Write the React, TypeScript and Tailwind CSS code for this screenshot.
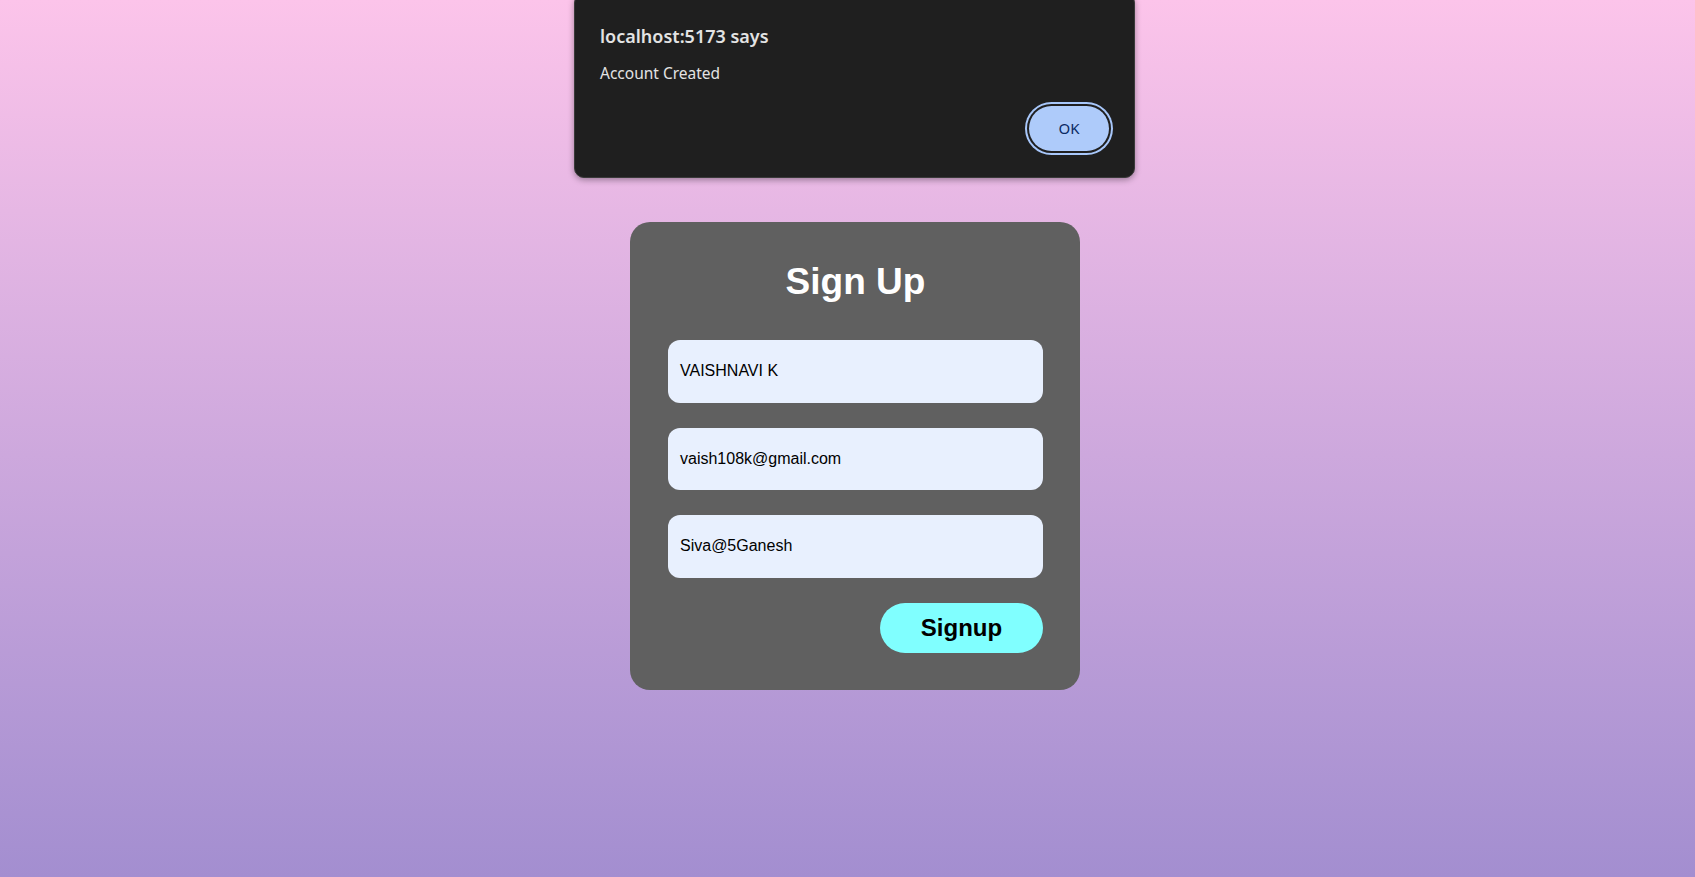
import React from "react";

export default function App() {
  return (
    <div className="relative h-[877px] w-full overflow-hidden bg-linear-to-b from-[#fcc4ea] to-[#a38ed0]">
      {/* Alert dialog overlay */}
      <div
        className="absolute left-[574px] top-[-7px] flex w-[561px] flex-col rounded-[10px] border border-[#3a3a3a] bg-[#1f1f1f] pl-[25px] pr-[25px] pt-[31px] pb-[26px] shadow-[0_2px_6px_rgba(0,0,0,0.35)]"
        style={{ fontFamily: '"Noto Sans", "Open Sans", sans-serif' }}
      >
        <div className="text-[18px] font-semibold leading-[23px] text-[#e3e3e3]">localhost:5173 says</div>
        <div className="mt-[15px] text-[15.5px] leading-[20px] text-[#e3e3e3]">Account Created</div>
        <div className="mt-[23px] flex justify-end">
          <button className="flex h-[45px] w-[80px] items-center justify-center rounded-full bg-[#aecbfa] text-[15px] text-[#0b2a63] shadow-[0_0_0_2px_#1f1f1f,0_0_0_4px_#a8c7fa]">
            OK
          </button>
        </div>
      </div>

      {/* Sign up card */}
      <div className="flex justify-center pl-[15px] pt-[222px]">
        <div
          className="flex w-[450px] flex-col rounded-[20px] bg-[#606060] pl-[38px] pr-[37px] pt-[39px] pb-[37.5px]"
          style={{ fontFamily: '"Liberation Sans", Arial, sans-serif' }}
        >
          <h1 className="text-center text-[37px] font-bold leading-[42px] text-white">Sign Up</h1>
          <div className="mt-[37px] flex flex-col gap-[25px]">
            <div className="flex h-[62.5px] items-center rounded-[12px] bg-[#e8f0fe] pl-[12px] text-[16px] text-black">
              VAISHNAVI K
            </div>
            <div className="flex h-[62.5px] items-center rounded-[12px] bg-[#e8f0fe] pl-[12px] text-[16px] text-black">
              vaish108k@gmail.com
            </div>
            <div className="flex h-[62.5px] items-center rounded-[12px] bg-[#e8f0fe] pl-[12px] text-[16px] text-black">
              Siva@5Ganesh
            </div>
          </div>
          <div className="mt-[25px] flex justify-end">
            <button className="flex h-[50px] w-[163px] items-center justify-center rounded-full bg-[#80ffff] text-[24px] font-bold text-black">
              Signup
            </button>
          </div>
        </div>
      </div>
    </div>
  );
}
